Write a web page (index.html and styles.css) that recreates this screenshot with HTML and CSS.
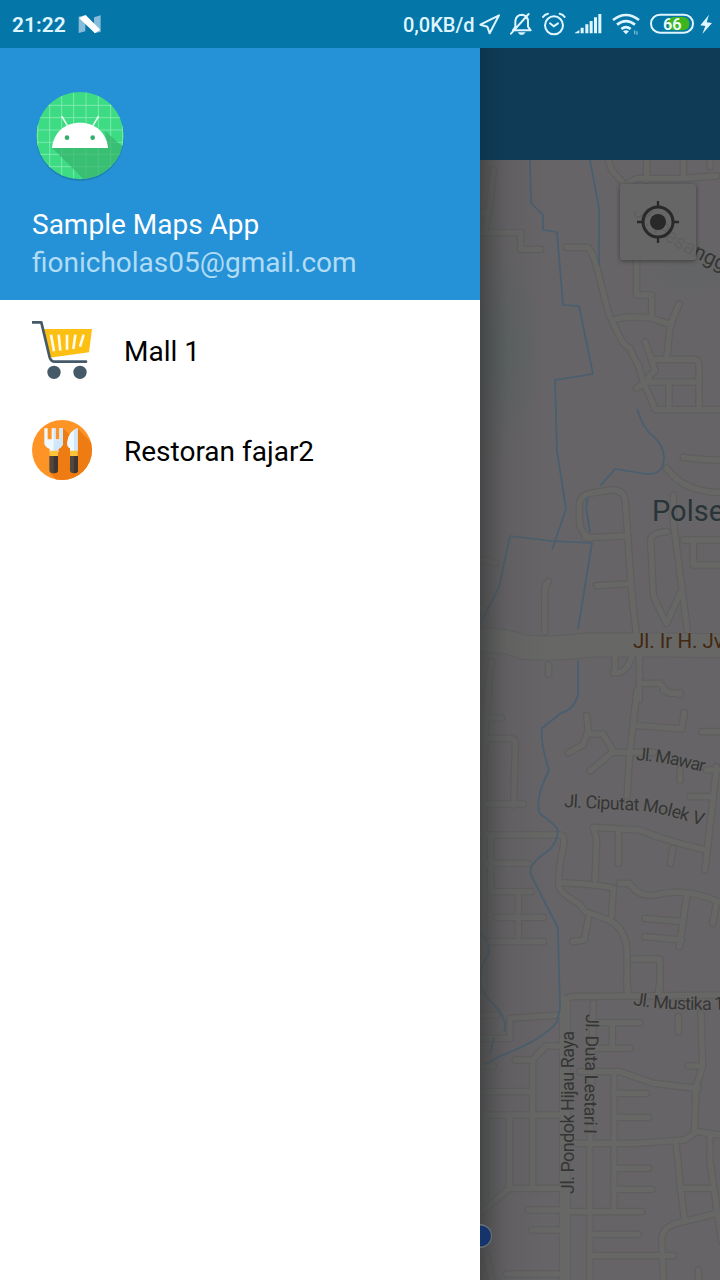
FILE: index.html
```html
<!DOCTYPE html>
<html lang="id">
<head>
<meta charset="utf-8">
<title>Sample Maps App</title>
<link rel="stylesheet" href="styles.css">
</head>
<body>
<div class="screen">
  <header class="status">
    <span class="clock">21:22</span>
    <svg class="nougat" viewBox="236 40 72 60" width="24" height="20"><path d="M238 48l20-4v48l-20 5zM284 50l20-6v50l-20 3z" fill="#86bcd9"/><path d="M239 52l20-9 44 44-16 11z" fill="#fff"/></svg>
    <span class="speed">0,0KB/d</span>
    <div class="icons">
      <svg viewBox="264 0 78 144" width="26" height="48"><path class="line" d="M327 46l-56 28 21 6 7 20z"/></svg>
      <svg viewBox="342 0 102 144" width="34" height="48"><path class="line" d="M370 91h52l-8-11V64c0-11-7-18-17-20-12 0-20 7-21 20v16l-7 11M416 42l-53 59"/><path class="solid" d="M383 97h24l-7 7h-10z"/></svg>
      <svg viewBox="444 0 96 144" width="32" height="48"><circle class="line" cx="492" cy="76" r="27"/><path class="line" d="M480 70l11 9 13-9M459 51q5-8 15-10M524 51q-5-8-15-10"/></svg>
      <svg viewBox="540 0 114 144" width="38" height="48"><path class="solid" d="M554 99l14-9v10h-14zM572 83h9v17h-9zM586 73h9v27h-9zM599 63h9v37h-9zM612 52h9v48h-9zM625 42h9v58h-9z"/></svg>
      <svg viewBox="654 0 108 144" width="36" height="48"><path class="wave" d="M669 60q39-30 78 0M681 74q27-21 54 0M694 87q14-11 28 0"/><path class="solid" d="M699 94q9-6 18 0l-9 9z"/><path d="M734 91v12M741 94v10" stroke="#73b9d8" stroke-width="4"/></svg>
      <svg viewBox="762 0 162 144" width="54" height="48"><rect x="833" y="51" width="65" height="40" rx="18" fill="#3eb51f"/><rect class="line" x="783" y="44" width="126" height="54" rx="27"/><text class="level" x="819" y="89">66</text></svg>
      <svg viewBox="924 0 66 144" width="22" height="48"><path class="solid" d="M957 44l-26 32 15 2-9 24 29-33-16-2z"/></svg>
    </div>
  </header>
  <div class="body">
    <nav class="drawer">
      <div class="account">
        <svg class="avatar" viewBox="36 24 288 288" width="96" height="96">
          <defs><clipPath id="disc"><circle cx="180" cy="167" r="131"/></clipPath></defs>
          <circle class="avatar-shadow" cx="180" cy="171" r="132"/>
          <g clip-path="url(#disc)">
            <path d="M36 24h288v288H36z" fill="#3ddc84"/>
            <path class="grid" d="M53 24v288M89 24v288M125 24v288M161 24v288M198 24v288M235 24v288M272 24v288M308 24v288M36 76h288M36 113h288M36 150h288M36 187h288M36 223h288M36 260h288"/>
            <path d="M97 204l108 108h119v-98l-70-62 10 52z" fill="#37b26d" fill-opacity=".7"/>
          </g>
          <path d="M96 204c4-46 38-76 84-76s80 30 84 76z" fill="#fff"/>
          <path d="M126 110l18 30M235 110l-18 30" stroke="#e6fff1" stroke-width="5" stroke-linecap="round"/>
          <circle cx="141" cy="173" r="7" fill="#36af6e"/><circle cx="218" cy="173" r="7" fill="#36af6e"/>
        </svg>
        <div class="name">Sample Maps App</div>
        <div class="mail">fionicholas05@gmail.com</div>
      </div>
      <a class="item">
        <svg viewBox="36 30 180 180" width="60" height="60"><path d="M69 57h147l-9 70-118 16z" fill="#fdbf12"/><path d="M93 74l9 50M116 74l5 48M141 74v45M166 74l-6 43M191 74l-11 36" stroke="#fffae9" stroke-width="8"/><path d="M37 37h27l25 105q4 13 16 13h93" fill="none" stroke="#455a68" stroke-width="8" stroke-linecap="round" stroke-linejoin="round"/><circle cx="102" cy="187" r="20" fill="#455a68"/><circle cx="180" cy="187" r="20" fill="#455a68"/></svg>
        <span>Mall 1</span>
      </a>
      <a class="item">
        <svg viewBox="36 330 180 180" width="60" height="60">
          <defs><clipPath id="plate"><circle cx="126" cy="420" r="90"/></clipPath></defs>
          <g clip-path="url(#plate)"><path d="M36 330h180v180H36z" fill="#ff9426"/><path d="M129 355l21 20 22-20 60 60v100H114l-24-26z" fill="#ee7c12"/></g>
          <path d="M73 355h10v33h12v-33h12v33h11v-33h11v43q0 12-14 19v10H89v-10q-16-7-16-19z" fill="#eef8ff"/><path d="M101 388h6v-33h-6zM118 355h11v43q0 12-14 19v10h-14v-36h17z" fill="#cfe7f8"/>
          <path d="M173 354v70h-23v-9q-10-5-9-17 3-34 32-44z" fill="#eef8ff"/><path d="M173 354v70h-11v-64z" fill="#cfe7f8"/>
          <path d="M89 422h25v17H89zM150 422h23v17h-23z" fill="#fbc43b"/>
          <path d="M88 438h26v42q0 10-13 10t-13-10zM150 438h24v42q0 10-12 10t-12-10z" fill="#52473f"/><path d="M101 438h13v42q0 10-13 10zM162 438h12v42q0 10-12 10z" fill="#40352f"/>
        </svg>
        <span>Restoran fajar2</span>
      </a>
    </nav>
    <main class="content">
      <div class="toolbar"></div>
      <div class="map">
        <svg viewBox="480 160 240 1120" width="240" height="1120">
          <defs>
            <linearGradient id="edge"><stop offset="0" stop-color="#383a3a" stop-opacity=".7"/><stop offset=".4" stop-color="#484a4a" stop-opacity=".2"/><stop offset="1" stop-color="#555" stop-opacity="0"/></linearGradient>
            <radialGradient id="green"><stop offset="0" stop-color="#5d6463"/><stop offset="1" stop-color="#5d6463" stop-opacity="0"/></radialGradient>
            <g id="roads">
              <g transform="translate(470 150) scale(.33333)">
                <path d="M70 62L60 160 45 240M30 188h16M30 248h122v50h60M290 292h65q22 35 28 70l32 125q10 25 30 65 15 35 35 42 10 30 25 50 15 60 35 95l15 40h205M415 30l10 30 35 40M530 30v60M640 30v55M465 104l35-18h130l110-8M720 30v20M500 330v105h45v65M430 510q40-15 115-5l60 20M628 462q-20 40-28 70l-10 95M525 575l20 55 10 32-20 20M550 628h120q17 0 17 17v127M500 714l30-18h155M597 698v77"/>
              </g>
              <g transform="translate(470 420) scale(.33333)">
                <path d="M30 418l48 11M30 560l10 10M360 355q-32-20-32-55v-48q4-27 36-33l65-10q37 4 37 40l20 280 15 130M345 353l125-5M380 497l100-6M235 485q-12 10-11 40v110M236 735v28M65 725q-10 30-10 115M435 710v45M490 690q-15 75-60 68M508 700v140M510 790h60l20 25 40 8M640 112q60 8 110 8M590 145q50 70 160 73M610 225v80l42 325M590 335q-52 5-48 30l8 160q10 30 40 85l45-100M640 360h110M670 370v65h80"/>
              </g>
              <g transform="translate(470 690) scale(.33333)">
                <path d="M52 0L40 240v660M50 84h44M50 145h70q18 0 16 20l-5 180M30 342h130M30 435h240q15 0 11 30-15 65-15 115-5 25 60 60l20 25 70 25q50 25 55 90v120M62 440v165h120M30 520h145M145 615v140M80 682h140M50 755h170M501 0l-22 190-8 130M580 0q20 15 50 8M490 105l145 12 8-50M350 77l5 45-15 42-45 25M360 132h40l30 53-70 58M430 187h120M695 125h55M740 230l-35 310M660 320h65M630 240v32M710 240h35M375 570l5-120-10-38 140 8q70 30 190 58M445 430v90M608 475l-7 45M270 578q100 4 160 16l-5 85M355 685l-12 65-35 5M450 580h28q30 45 80 34 90-22 190 22M650 620l-22 150M525 685l110 10M525 740l110 10M740 640l-12 60M490 807h80v93"/>
              </g>
              <g transform="translate(470 980) scale(.33333)">
                <path d="M470 0l5 40M570 0l-5 40M285 900V70q0-18 20-20l445-5M30 105h50M30 175h90v-60l150-10M30 258h40M30 335h150M30 405h240M45 410v250M118 410v215l-88 75M188 620V240l40-42h50M135 240h50M120 625h150M175 690h95M185 750h85M110 882h155M360 900V500l10-430M360 128h150M427 130v75M370 205h110M330 275h120l100 35 135 15M693 100l5 160-20 60-5 140-30 20-145 10H315M655 258h40M625 110v45M432 280v415M435 340h95M435 412h100M435 565h100M435 628h110M305 695h210M360 763h145M360 827h250M680 455l70 10M618 490l15 145 10 80M720 465v80l35 240M630 625h90M740 700l-100 25q-60 10-65 50l5 125M685 870v30M50 830l15 70"/>
              </g>
            </g>
            <path id="highway" d="M470 641q32-3 53 6 28 3 65-2h80l60 1"/>
          </defs>
          <path d="M480 160h240v1120H480z" fill="#676467"/>
          <ellipse cx="500" cy="350" rx="48" ry="110" fill="url(#green)"/><ellipse cx="690" cy="275" rx="60" ry="25" fill="url(#green)" opacity=".6"/>
          <use href="#roads" class="casing"/>
          <use href="#highway" class="highway-casing"/>
          <path class="spine-casing" d="M565 1290V996"/>
          <use href="#roads" class="road"/>
          <use href="#highway" class="highway"/>
          <path class="spine" d="M565 1290V996"/>
          <g class="river">
            <path d="M530 160l1 43 12 12v15l14 2 6 73 16 1 14 68-38 6 2 71 9 58-14 41M590 160l9 48v57M637 409q6 20 17 28 9 8 10 20 0 18-17 17l-32-5q-7 8-15 17M588 497l-2 10 4 25M480 624l19-37 11-51 42 5 40 2-14 86M578 660v34q-3 15-17 19l-19 15q-2 15 7 42-15 30-9 44 15 10 18 16-1 17-16 25-14 11-11 20l27 53 2 80-3 14q-6 8-22 18-20 11-35 16l-16 9M476 930q15 10 13 23-14 22-7 36l6 10q22 20 16 33M494 1038l-4 16"/>
          </g>
          <path d="M480 160h70v1120h-70z" fill="url(#edge)"/>
          <circle cx="480" cy="1236" r="12" fill="#6f7275"/><circle cx="480.500" cy="1236" r="10.500" fill="#15346b"/>
          <g class="labels">
            <text class="place" x="652" y="521">Polse</text>
            <text class="main-road" x="633" y="647.500">Jl. Ir H. Jv</text>
            <path id="mawar" d="M636 760Q670 762 714 775" fill="none"/>
            <path id="ciputat" d="M564 807L642 811Q670 814 720 832" fill="none"/>
            <path id="mustika" d="M633 1005Q675 1012 740 1009" fill="none"/>
            <path id="pesanggrahan" d="M632 213Q665 247 730 274" fill="none"/>
            <text><textPath href="#mawar" textLength="69">Jl. Mawar</textPath></text>
            <text><textPath href="#ciputat" textLength="140">Jl. Ciputat Molek V</textPath></text>
            <text><textPath href="#mustika" textLength="92">Jl. Mustika 1</textPath></text>
            <text class="avenue"><textPath href="#pesanggrahan">Jl. Pesangg</textPath></text>
            <text transform="translate(574 1194) rotate(-90)" textLength="163">Jl. Pondok Hijau Raya</text>
            <text transform="translate(586 1014) rotate(91)" textLength="120">Jl. Duta Lestari I</text>
          </g>
        </svg>
        <div class="locate">
          <svg viewBox="0 0 42 42" width="42" height="42"><circle cx="21" cy="21" r="15" fill="none" stroke="#292929" stroke-width="3"/><circle cx="21" cy="21" r="8" fill="#292929"/><path d="M21 0v7M21 35v7M0 21h7M35 21h7" stroke="#292929" stroke-width="2.300"/></svg>
        </div>
      </div>
    </main>
  </div>
</div>
</body>
</html>
```
FILE: styles.css
```css
body { margin: 0; font-family: Roboto, "Noto Sans", sans-serif; }
.screen { width: 720px; height: 1280px; overflow: hidden; display: flex; flex-direction: column; background: #fff; }
.status { height: 48px; flex: none; display: flex; align-items: center; box-sizing: border-box; padding-left: 12px; background: #0576a8; color: #dff5ff; font-size: 21px; font-weight: 600; }
.clock { width: 54px; padding-top: 1px; white-space: nowrap; }
.nougat { margin-left: 12px; }
.speed { margin-left: auto; width: 75px; padding-top: 1px; font-size: 20px; font-weight: 500; white-space: nowrap; }
.icons { display: flex; }
.line { fill: none; stroke: #dff5ff; stroke-width: 6; stroke-linejoin: round; stroke-linecap: round; }
.solid { fill: #dff5ff; }
.wave { fill: none; stroke: #dff5ff; stroke-width: 8; }
.level { fill: #efffff; font-size: 49px; font-weight: 600; }
.body { display: flex; flex: 1; }
.drawer { width: 480px; flex: none; background: #fff; }
.account { height: 252px; box-sizing: border-box; padding: 40px 32px 0; background: #2591d6; font-size: 28px; line-height: 38px; color: #fff; }
.avatar { display: block; margin-bottom: 22px; }
.avatar-shadow { fill: #196c8f; opacity: .5; }
.grid { stroke: #8aebb5; stroke-width: 2.5; }
.mail { color: #b1dcf5; }
.item { height: 100px; display: flex; align-items: center; gap: 32px; padding-left: 32px; color: #000; font-size: 28px; }
.item span { padding-top: 2px; }
.content { width: 240px; display: flex; flex-direction: column; }
.toolbar { height: 112px; background: linear-gradient(90deg, #0c344e, #0f3b57 24px); }
.map { position: relative; height: 1120px; }
.map > svg { display: block; }
.casing, .road { fill: none; stroke-linejoin: round; stroke-linecap: round; }
.casing { stroke: #5f5e5f; stroke-width: 23; }
.road { stroke: #676766; stroke-width: 16; }
.highway-casing, .highway, .spine-casing, .spine { fill: none; }
.highway-casing { stroke: #5f5f5f; stroke-width: 25; }
.highway { stroke: #676866; stroke-width: 23; }
.spine-casing { stroke: #5f5f5f; stroke-width: 12; }
.spine { stroke: #676866; stroke-width: 10; }
.river { fill: none; stroke: #475f70; stroke-width: 1.7; stroke-linejoin: round; }
.labels { font-size: 18px; fill: #353535; }
.labels text { stroke: #676766; stroke-width: 2; paint-order: stroke; }
.place { font-size: 29px; fill: #29343a; }
.main-road { font-size: 20.5px; fill: #432711; }
.avenue { font-size: 21px; }
.locate { position: absolute; left: 140px; top: 24px; width: 76px; height: 76px; display: flex; align-items: center; justify-content: center; border-radius: 3px; background: rgba(102, 102, 102, .85); box-shadow: 0 1px 4px rgba(40, 40, 40, .65); }
```
